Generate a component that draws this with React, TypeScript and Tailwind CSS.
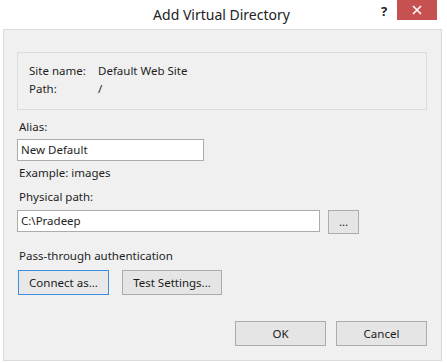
import React from 'react';

const font = { fontFamily: '"Noto Sans", "Open Sans", Arial, sans-serif' };

function Btn({ label, width, focused = false }: { label: string; width: string; focused?: boolean }) {
  return (
    <button
      className={`${width} h-[25px] text-[11.5px] text-[#1a1a1a] border ${
        focused ? 'border-[#3c8fde] bg-[#e8e8e8]' : 'border-[#acacac] bg-[#e5e5e5]'
      }`}
    >
      {label}
    </button>
  );
}

export default function App() {
  return (
    <div className="w-[447px] h-[363px] bg-white relative overflow-hidden text-[#1e1e1e]" style={font}>
      {/* title bar */}
      <div className="h-[29px] flex items-center justify-center relative">
        <span className="text-[14px] text-[#222] ml-[-4px]">Add Virtual Directory</span>
        <span className="absolute left-[381px] top-[2px] text-[13px] font-bold text-[#222]">?</span>
        <div className="absolute left-[397px] top-0 w-[40px] h-[20px] bg-[#c75050] flex items-center justify-center">
          <svg width="10" height="10" viewBox="0 0 10 10">
            <path d="M1 1 L9 9 M9 1 L1 9" stroke="#fff" strokeWidth="1.6" />
          </svg>
        </div>
      </div>

      {/* client area */}
      <div className="ml-[3px] w-[439px] h-[332px] border border-[#dadada] bg-[#f0f0f0] pl-[13px] pr-[14px] text-[11.5px]">
        <div className="mt-[22px] w-[410px] h-[58px] border border-[#dcdcdc] pl-[11px] pt-[9px]">
          <div className="flex h-[18px] items-center">
            <span className="w-[69px]">Site name:</span>
            <span>Default Web Site</span>
          </div>
          <div className="flex h-[18px] items-center">
            <span className="w-[69px]">Path:</span>
            <span>/</span>
          </div>
        </div>

        <div className="mt-[9px] h-[16px] leading-[16px] pl-[2px]">Alias:</div>
        <div className="mt-[4px] w-[187px] h-[22px] border border-[#acacac] bg-white pl-[3px] leading-[20px]">
          New Default
        </div>
        <div className="mt-[4px] h-[16px] leading-[16px] pl-[2px]">Example: images</div>
        <div className="mt-[8px] h-[16px] leading-[16px] pl-[2px]">Physical path:</div>

        <div className="mt-[5px] flex items-start gap-[8px]">
          <div className="w-[303px] h-[22px] border border-[#acacac] bg-white pl-[3px] leading-[20px]">
            C:\Pradeep
          </div>
          <button className="w-[31px] h-[24px] border border-[#acacac] bg-[#e5e5e5] text-[11.5px] leading-[18px]">
            ...
          </button>
        </div>

        <div className="mt-[14px] h-[16px] leading-[16px] pl-[2px]">Pass-through authentication</div>
        <div className="mt-[6px] flex gap-[13px] pl-[1px]">
          <Btn label="Connect as..." width="w-[91px]" focused />
          <Btn label="Test Settings..." width="w-[100px]" />
        </div>

        <div className="mt-[26px] flex justify-end gap-[10px]">
          <Btn label="OK" width="w-[91px]" />
          <Btn label="Cancel" width="w-[91px]" />
        </div>
      </div>
    </div>
  );
}
